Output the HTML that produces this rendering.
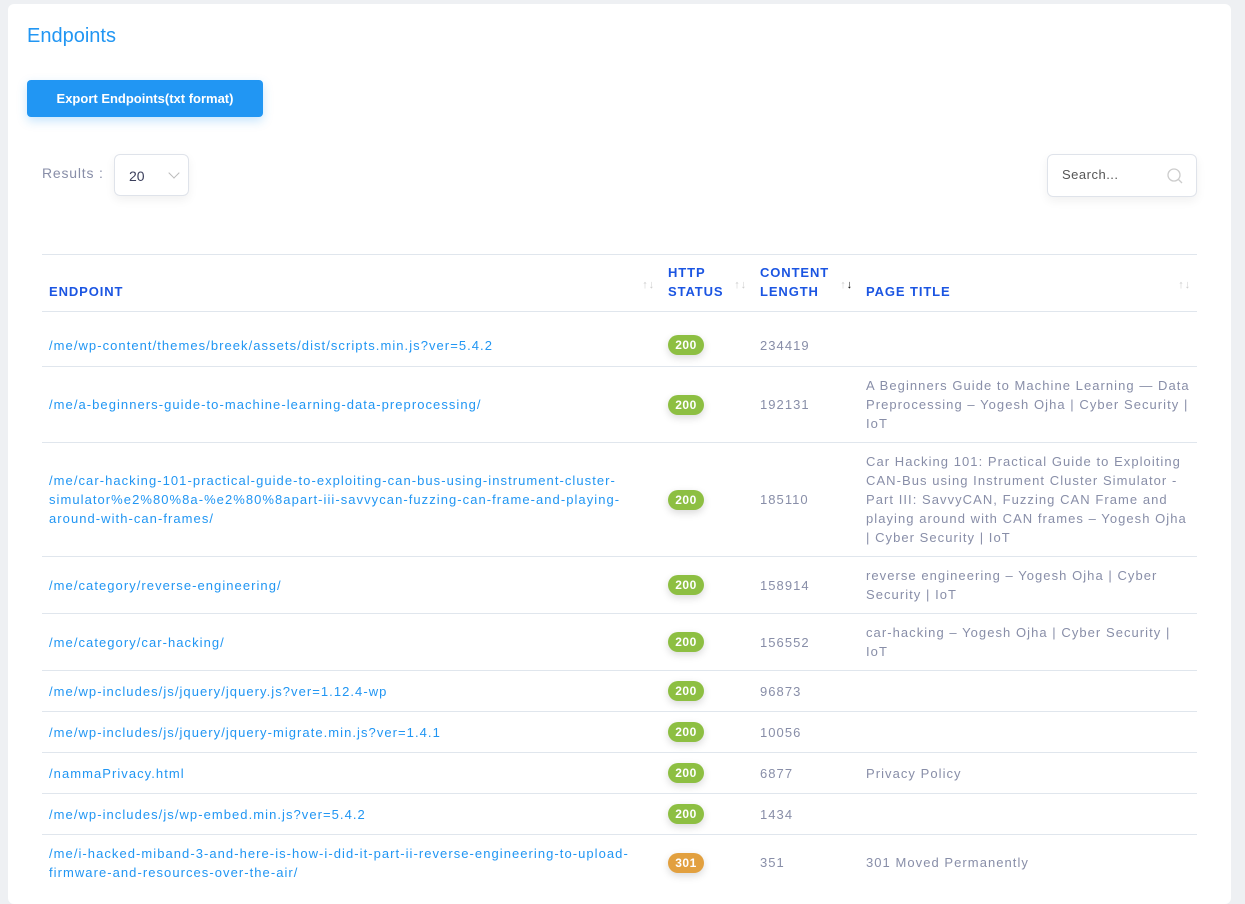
<!DOCTYPE html>
<html><head><meta charset="utf-8"><style>
body{margin:0;background:#eef0f3;font-family:"Liberation Sans",sans-serif;width:1245px;height:888px;overflow:hidden;position:relative}
.card{position:absolute;left:8px;top:4px;width:1223px;height:900px;background:#fff;border-radius:6px}
h1{position:absolute;left:19px;top:21px;margin:0;font-weight:normal;font-size:20px;color:#2196f3}
.btn{position:absolute;left:19px;top:76px;width:236px;height:37px;background:#2196f3;color:#fff;border-radius:4px;font-size:13px;font-weight:bold;line-height:37px;text-align:center;box-shadow:0 4px 10px rgba(33,150,243,.25)}
.res{position:absolute;left:34px;top:161px;font-size:14px;color:#888ea8;letter-spacing:.8px}
.sel{position:absolute;left:106px;top:150px;width:75px;height:42px;border:1px solid #dfe3ea;border-radius:6px;box-shadow:0 4px 10px rgba(0,0,0,.06);font-size:14px;color:#3b3f5c;line-height:42px;padding-left:14px;box-sizing:border-box}
.sel i{position:absolute;right:10px;top:14px;width:7px;height:7px;border-right:1px solid #bbb;border-bottom:1px solid #bbb;transform:rotate(45deg)}
.srch{position:absolute;left:1039px;top:150px;width:150px;height:43px;border:1px solid #dfe3ea;border-radius:6px;box-shadow:0 4px 10px rgba(0,0,0,.06);font-size:13px;color:#555;line-height:40px;padding-left:14px;box-sizing:border-box;letter-spacing:.5px}
table{position:absolute;left:34px;top:250px;width:1155px;border-collapse:collapse;font-size:13px;letter-spacing:1.05px}
th{color:#1b55e2;font-size:13px;text-align:left;font-weight:bold;height:46px;vertical-align:bottom;padding:0 7px 10px;line-height:19px;position:relative;letter-spacing:.9px}
tr{border-top:1px solid #e0e6ed}
thead tr{border-bottom:1px solid #e0e6ed}
td{padding:0 7px;line-height:19px;color:#888ea8}
tr.f td{padding-top:12px}
td.e{color:#2196f3}
.s{position:absolute;right:6px;bottom:16px;color:#ccc;font-size:11px;font-weight:normal}
.b{display:inline-block;background:#8dbf42;color:#fff;font-weight:bold;font-size:12px;border-radius:10px;padding:1px 0;width:36px;text-align:center;line-height:18px;letter-spacing:.5px;box-shadow:0 3px 8px rgba(0,0,0,.15)}
.o{background:#e2a03f}
</style></head><body>
<div class="card">
<h1>Endpoints</h1>
<div class="btn">Export Endpoints(txt format)</div>
<div class="res">Results :</div>
<div class="sel">20<i></i></div>
<div class="srch">Search...<svg style="position:absolute;right:12px;top:12px" width="18" height="18" viewBox="0 0 18 18"><circle cx="8" cy="8" r="6" fill="none" stroke="#ccc" stroke-width="1.3"/><path d="M12.5 12.5L16 16" stroke="#ccc" stroke-width="1.3"/></svg></div>
<table>
<colgroup><col style="width:619px"><col style="width:92px"><col style="width:106px"><col></colgroup>
<thead><tr><th>ENDPOINT<span class="s">↑↓</span></th><th>HTTP<br>STATUS<span class="s">↑↓</span></th><th>CONTENT<br>LENGTH<span class="s">↑<b style="color:#000">↓</b></span></th><th>PAGE TITLE<span class="s">↑↓</span></th></tr></thead>
<tbody>
<tr class="f" style="height:55px"><td class="e">/me/wp-content/themes/breek/assets/dist/scripts.min.js?ver=5.4.2</td><td><span class="b">200</span></td><td>234419</td><td></td></tr>
<tr style="height:76px"><td class="e">/me/a-beginners-guide-to-machine-learning-data-preprocessing/</td><td><span class="b">200</span></td><td>192131</td><td>A Beginners Guide to Machine Learning — Data Preprocessing – Yogesh Ojha | Cyber Security | IoT</td></tr>
<tr style="height:114px"><td class="e">/me/car-hacking-101-practical-guide-to-exploiting-can-bus-using-instrument-cluster-simulator%e2%80%8a-%e2%80%8apart-iii-savvycan-fuzzing-can-frame-and-playing-around-with-can-frames/</td><td><span class="b">200</span></td><td>185110</td><td>Car Hacking 101: Practical Guide to Exploiting CAN-Bus using Instrument Cluster Simulator - Part III: SavvyCAN, Fuzzing CAN Frame and playing around with CAN frames – Yogesh Ojha | Cyber Security | IoT</td></tr>
<tr style="height:57px"><td class="e">/me/category/reverse-engineering/</td><td><span class="b">200</span></td><td>158914</td><td>reverse engineering – Yogesh Ojha | Cyber Security | IoT</td></tr>
<tr style="height:57px"><td class="e">/me/category/car-hacking/</td><td><span class="b">200</span></td><td>156552</td><td>car-hacking – Yogesh Ojha | Cyber Security | IoT</td></tr>
<tr style="height:41px"><td class="e">/me/wp-includes/js/jquery/jquery.js?ver=1.12.4-wp</td><td><span class="b">200</span></td><td>96873</td><td></td></tr>
<tr style="height:41px"><td class="e">/me/wp-includes/js/jquery/jquery-migrate.min.js?ver=1.4.1</td><td><span class="b">200</span></td><td>10056</td><td></td></tr>
<tr style="height:41px"><td class="e">/nammaPrivacy.html</td><td><span class="b">200</span></td><td>6877</td><td>Privacy Policy</td></tr>
<tr style="height:41px"><td class="e">/me/wp-includes/js/wp-embed.min.js?ver=5.4.2</td><td><span class="b">200</span></td><td>1434</td><td></td></tr>
<tr style="height:56px"><td class="e">/me/i-hacked-miband-3-and-here-is-how-i-did-it-part-ii-reverse-engineering-to-upload-firmware-and-resources-over-the-air/</td><td><span class="b o">301</span></td><td>351</td><td>301 Moved Permanently</td></tr>
</tbody></table>
</div>
</body></html>
